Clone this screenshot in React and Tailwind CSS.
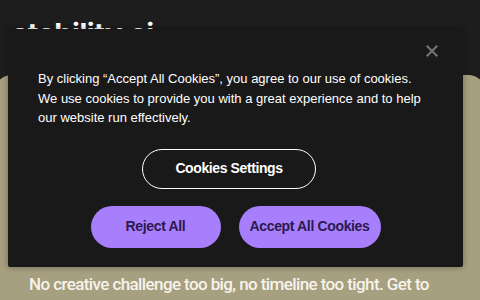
export default function App() {
  return (
    <div className="relative w-[480px] h-[300px] overflow-hidden bg-[#1e1d1e] font-['Liberation_Sans',Arial,sans-serif]">
      <div className="pl-[12px] pt-[16px] h-[75px]">
        <span className="text-white text-[29px] font-bold leading-[36px] tracking-[-0.5px] font-['Inter',sans-serif]">stability.ai</span>
      </div>
      <div className="mx-[-6px] h-[260px] rounded-[18px] bg-[#a69f80] pt-[198px] pl-[35px]">
        <p className="text-[#f6f3ea] text-[17px] leading-[22px] font-medium font-['Roboto',sans-serif] tracking-[-0.6px] whitespace-nowrap">
          No creative challenge too big, no timeline too tight. Get to
        </p>
      </div>

      <div className="absolute left-[8px] top-[29px] w-[455px] h-[238px] rounded-[2px] bg-[#1a191a] shadow-[0_0_6px_rgba(0,0,0,0.35)]">
        <button className="absolute left-[418px] top-[16px] w-[12px] h-[12px] flex items-center justify-center">
          <svg width="12" height="12" viewBox="0 0 12 12">
            <path d="M1.5 1.5 L10.5 10.5 M10.5 1.5 L1.5 10.5" stroke="#737373" strokeWidth="2.2" strokeLinecap="square" />
          </svg>
        </button>
        <div className="pt-[40px] pl-[30px] pr-[36px]">
          <p className="text-white text-[13px] leading-[19.5px]">
            By clicking “Accept All Cookies”, you agree to our use of cookies. We use cookies to provide you with a great experience and to help our website run effectively.
          </p>
          <div className="flex justify-center mt-[21px] pr-[7px]">
            <button className="w-[174px] h-[40px] rounded-full border border-white text-white text-[14px] font-bold tracking-[-0.4px]">
              Cookies Settings
            </button>
          </div>
        </div>
        <div className="flex justify-center gap-[18px] mt-[17px]">
          <button className="w-[130px] h-[42px] rounded-full bg-[#a77ffc] text-[#2b1a4d] text-[14px] font-bold tracking-[-0.35px]">
            Reject All
          </button>
          <button className="w-[142px] h-[42px] rounded-full bg-[#a77ffc] text-[#2b1a4d] text-[14px] font-bold tracking-[-0.35px]">
            Accept All Cookies
          </button>
        </div>
      </div>
    </div>
  );
}
